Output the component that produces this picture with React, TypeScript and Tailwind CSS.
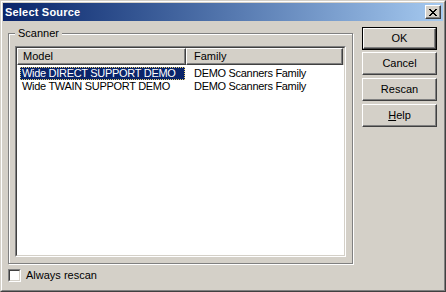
import React from "react";

const raised =
  "border border-t-white border-l-white border-r-[#404040] border-b-[#404040] shadow-[inset_-1px_-1px_0_#808080] bg-[#d4d0c8]";

const Btn = ({ children, def }: { children: React.ReactNode; def?: boolean }) => (
  <div className={def ? "border border-black" : ""}>
    <div className={`${raised} flex items-center justify-center ${def ? "h-[21px]" : "h-[23px]"} text-black`}>{children}</div>
  </div>
);

const rows = [
  { model: "Wide DIRECT SUPPORT DEMO", family: "DEMO Scanners Family", sel: true },
  { model: "Wide TWAIN SUPPORT DEMO", family: "DEMO Scanners Family", sel: false },
];

export default function App() {
  return (
    <div className="w-[446px] h-[292px] bg-[#d4d0c8] border border-t-[#d4d0c8] border-l-[#d4d0c8] border-r-[#404040] border-b-[#404040] text-[11px] leading-[13px] font-['Liberation_Sans',Arial,sans-serif] select-none">
      <div className="h-full border border-t-white border-l-white border-r-[#808080] border-b-[#808080] p-[1px] flex flex-col">
        {/* title bar */}
        <div className="h-[18px] flex items-center justify-between bg-gradient-to-r from-[#0a246a] to-[#a6caf0] pl-[2px] pr-[2px]">
          <span className="text-white font-bold tracking-[0.2px]">Select Source</span>
          <div className={`${raised} w-[16px] h-[14px] flex items-center justify-center`}>
            <svg width="8" height="7" viewBox="0 0 8 7" shapeRendering="crispEdges">
              <path d="M0 0h2v1h-2zM6 0h2v1h-2zM1 1h2v1h-2zM5 1h2v1h-2zM2 2h4v1h-4zM3 3h2v1h-2zM2 4h4v1h-4zM1 5h2v1h-2zM5 5h2v1h-2zM0 6h2v1h-2zM6 6h2v1h-2z" fill="#000" />
            </svg>
          </div>
        </div>

        {/* body */}
        <div className="flex pl-[5px] pr-[5px]">
          <div className="flex flex-col">
            <fieldset className="mt-[6px] w-[345px] border border-[#808080] shadow-[inset_1px_1px_0_#fff,1px_1px_0_#fff] pl-[6px] pr-[6px] pb-[6px]">
              <legend className="px-[3px] bg-[#d4d0c8] text-black">Scanner</legend>
              <div className="mt-[6px] h-[211px] border border-t-[#808080] border-l-[#808080] border-r-white border-b-white">
                <div className="h-full border border-t-[#404040] border-l-[#404040] border-r-[#d4d0c8] border-b-[#d4d0c8] bg-white">
                  <div className="flex h-[17px] bg-[#d4d0c8]">
                    <div className={`${raised} w-[169px] pl-[5px] flex items-center text-black`}>Model</div>
                    <div className={`${raised} w-[157px] pl-[7px] flex items-center text-black`}>Family</div>
                  </div>
                  <div className="pt-[2px] tracking-[-0.3px]">
                    {rows.map((r) => (
                      <div key={r.model} className="flex h-[13px] items-center">
                        <div className="w-[169px] pl-[3px]">
                          <span
                            className={
                              r.sel
                                ? "inline-block h-[13px] w-[165px] pl-[1px] bg-[#0a246a] text-white border border-dotted border-[#e8d070] leading-[11px]"
                                : "inline-block h-[13px] w-[165px] pl-[2px] text-black"
                            }
                          >
                            {r.model}
                          </span>
                        </div>
                        <div className="pl-[8px] text-black">{r.family}</div>
                      </div>
                    ))}
                  </div>
                </div>
              </div>
            </fieldset>
            <label className="flex items-center mt-[5px] text-black">
              <span className="w-[13px] h-[13px] border border-t-[#808080] border-l-[#808080] border-r-white border-b-white">
                <span className="block w-full h-full border border-t-[#404040] border-l-[#404040] border-r-[#d4d0c8] border-b-[#d4d0c8] bg-white" />
              </span>
              <span className="ml-[5px]">Always rescan</span>
            </label>
          </div>

          <div className="ml-[9px] w-[75px] mt-[6px] flex flex-col">
            <Btn def>OK</Btn>
            <div className="mt-[2px]"><Btn>Cancel</Btn></div>
            <div className="mt-[3px]"><Btn>Rescan</Btn></div>
            <div className="mt-[3px]"><Btn><span><span className="underline">H</span>elp</span></Btn></div>
          </div>
        </div>
      </div>
    </div>
  );
}
